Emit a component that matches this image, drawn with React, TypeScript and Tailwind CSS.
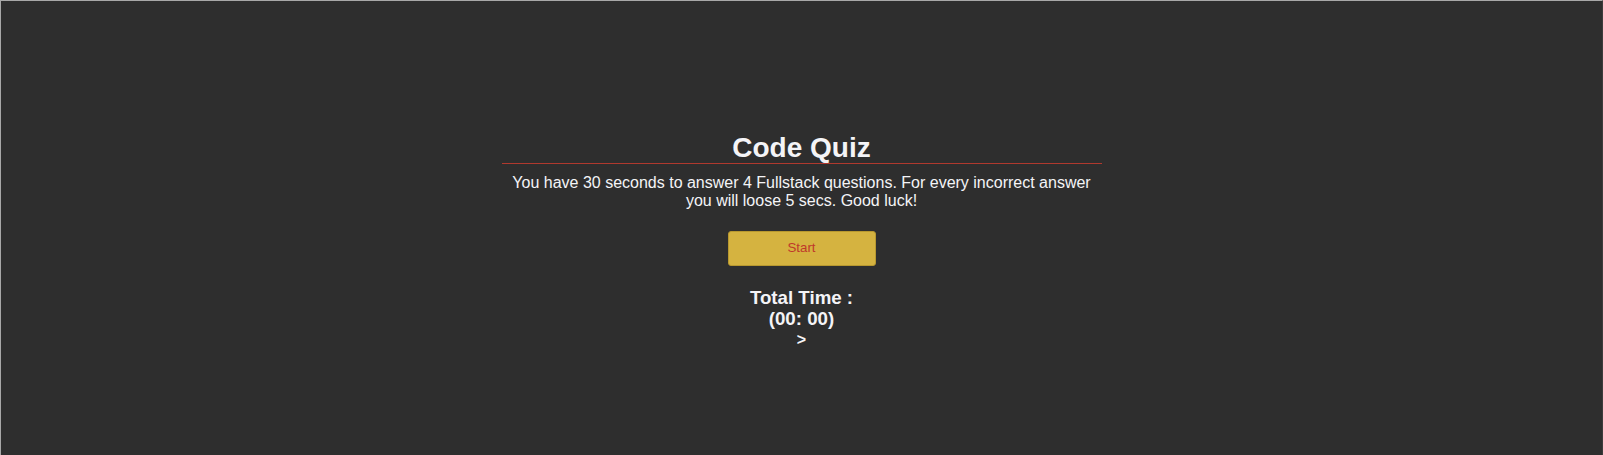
import React from "react";

export default function App() {
  return (
    <div
      className="h-[455px] w-full overflow-hidden bg-[#2e2e2e] border-t border-l border-r border-t-[#a8a8a8] border-l-[#a8a8a8] border-r-[#3c3c3c] text-[#f4f4f7]"
      style={{ fontFamily: '"Liberation Sans", Arial, Helvetica, sans-serif' }}
    >
      <div className="mx-auto w-[600px] pt-[131px] flex flex-col items-center text-center">
        <h1 className="w-full text-[28px] leading-[31px] font-bold border-b border-[#b0392e]">
          Code Quiz
        </h1>
        <p className="mt-[10px] text-[16px] leading-[18.4px]">
          You have 30 seconds to answer 4 Fullstack questions. For every incorrect answer you will loose 5 secs. Good luck!
        </p>
        <button
          type="button"
          className="mt-[20px] w-[148px] h-[35px] rounded-[3px] bg-[#d5b340] border border-[#b8982f] text-[13.33px] text-[#c0392b]"
        >
          Start
        </button>
        <h3 className="mt-[21px] text-[18.72px] leading-[21.5px] font-bold">
          Total Time :
          <br />
          (00: 00)
        </h3>
        <div className="mt-[1px] text-[16px] leading-[18.4px] font-bold">&gt;</div>
      </div>
    </div>
  );
}
